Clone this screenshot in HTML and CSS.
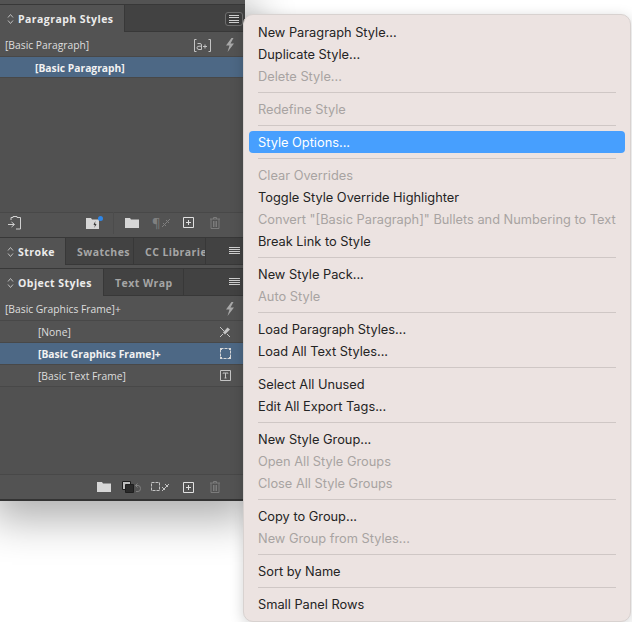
FILE: index.html
```html
<!DOCTYPE html>
<html lang="en">

<head>
    <meta charset="UTF-8">
    <meta name="viewport" content="width=device-width, initial-scale=1.0">
    <title>Paragraph Styles</title>
    <link rel="stylesheet" href="styles.css">
</head>

<body>
    <div class="panel">
        <div class="tabs">
            <div class="tab active tab-para"><span class="updown"><svg width="7" height="12" viewBox="0 0 7 12"><path d="M1 4.500 3.500 1.500 6 4.500M1 7.500 3.500 10.500 6 7.500"/></svg></span>Paragraph Styles</div>
            <div class="tab-fill"></div>
            <div class="menu-btn boxed"><i></i><i></i><i></i><i></i></div>
        </div>
        <div class="row row-head">
            <span class="row-text">[Basic Paragraph]</span>
            <svg class="icon-aplus" width="17" height="13" viewBox="0 0 17 13"><path d="M2.500.5H.5V12.500H2.500M14.500.5H16.500V12.500H14.500M3.500 4.500H6Q7.500 4.500 7.500 6V10.500H5Q3 10.500 3 8.800 3 7.200 5 7.200H7.500M9 7.500H13M11 5.500V9.500"/></svg>
            <svg class="icon-bolt" width="10" height="14" viewBox="0 0 10 14"><path d="M6.500 0 1 7.500H4.500L2.500 14 9 5.500H5.500L8.500 0Z"/></svg>
        </div>
        <div class="row selected row-para"><span class="indent-para">[Basic Paragraph]</span></div>
        <div class="list list-para"></div>
        <div class="footer footer-para">
            <svg class="ic-load" width="14" height="14" viewBox="0 0 14 14"><path d="M3 4V1.500H5V.5H9V1.500H12.500V13H8M0 8.500H6M3.500 6 6.500 8.500 3.500 11"/></svg>
            <span class="foot-gap-a"></span>
            <svg class="ic-folder-dot" width="17" height="13" viewBox="0 0 17 13"><path class="fill" d="M0 2H5L6 3.500H13V13H0Z"/><path class="notch" d="M9.500 5 7.500 8.500 9 9.500 8 12 10.500 8.500 9 7.500Z"/><circle class="dot" cx="14.500" cy="2.500" r="2.500"/></svg>
            <span class="foot-rule"></span>
            <svg class="ic-folder" width="14" height="10" viewBox="0 0 14 10"><path class="fill" d="M0 0H5L6 1.500H14V10H0Z"/></svg>
            <span class="para-mark">¶</span>
            <svg class="ic-star" width="8" height="8" viewBox="0 0 8 8"><path d="M0 8 8 0M4 1 7 4M1 4 4 7"/></svg>
            <svg class="ic-new" width="11" height="11" viewBox="0 0 11 11"><path d="M.5.5H10.500V10.500H.5ZM5.500 3V8M3 5.500H8"/></svg>
            <svg class="ic-trash" width="10" height="12" viewBox="0 0 10 12"><path d="M0 2H10M3.500 2V.5H6.500V2M1 2V11.500H9V2M3.500 4V10M5 4V10M6.500 4V10"/></svg>
        </div>
        <div class="panel-rule"></div>
        <div class="tabs">
            <div class="tab active tab-stroke"><span class="updown"><svg width="7" height="12" viewBox="0 0 7 12"><path d="M1 4.500 3.500 1.500 6 4.500M1 7.500 3.500 10.500 6 7.500"/></svg></span>Stroke</div>
            <div class="tab tab-swatches">Swatches</div>
            <div class="tab tab-cc"><span class="tab-clip">CC Libraries</span></div>
            <div class="tab-fill"></div>
            <div class="menu-btn"><i></i><i></i><i></i><i></i></div>
        </div>
        <div class="panel-rule rule-tall"></div>
        <div class="tabs">
            <div class="tab active tab-object"><span class="updown"><svg width="7" height="12" viewBox="0 0 7 12"><path d="M1 4.500 3.500 1.500 6 4.500M1 7.500 3.500 10.500 6 7.500"/></svg></span>Object Styles</div>
            <div class="tab tab-wrap">Text Wrap</div>
            <div class="tab-fill"></div>
            <div class="menu-btn"><i></i><i></i><i></i><i></i></div>
        </div>
        <div class="row row-head">
            <span class="row-text">[Basic Graphics Frame]+</span>
            <svg class="icon-bolt" width="10" height="14" viewBox="0 0 10 14"><path d="M6.500 0 1 7.500H4.500L2.500 14 9 5.500H5.500L8.500 0Z"/></svg>
        </div>
        <div class="row row-obj">
            <span class="indent-obj">[None]</span>
            <svg class="ic-none" width="12" height="12" viewBox="0 0 12 12"><path d="M1 1 5 5M8 8 11 11M1 11 4 8"/><path class="nib" d="M4 6.500 8.500 1.500 11 3.500 6 8.500Z"/></svg>
        </div>
        <div class="row row-obj selected">
            <span class="indent-obj">[Basic Graphics Frame]+</span>
            <svg class="ic-frame" width="11" height="11" viewBox="0 0 11 11"><path d="M.5.5H10.500V10.500H.5Z"/><path class="corners" d="M0 0H2V2H0ZM9 0H11V2H9ZM0 9H2V11H0ZM9 9H11V11H9Z"/></svg>
        </div>
        <div class="row row-obj">
            <span class="indent-obj">[Basic Text Frame]</span>
            <svg class="ic-text" width="11" height="11" viewBox="0 0 11 11"><path d="M.5.5H10.500V10.500H.5ZM3 3.500V3H8V3.500M5.500 3V8M4.500 8H6.500"/></svg>
        </div>
        <div class="list list-obj"></div>
        <div class="footer footer-obj">
            <span class="foot-gap-b"></span>
            <svg class="ic-folder" width="14" height="10" viewBox="0 0 14 10"><path class="fill" d="M0 0H5L6 1.500H14V10H0Z"/></svg>
            <svg class="ic-clear" width="19" height="13" viewBox="0 0 19 13"><path class="back" d="M.5.5H8.500V8.500H.5Z"/><path class="front" d="M3.500 3.500H11.500V11.500H3.500Z"/><path class="arrow" d="M13.500 4.500H16Q18.500 4.500 18.500 7.500T16 10.500H14M13.500 4.500 15.500 2.500M13.500 4.500 15.500 6.500"/></svg>
            <svg class="ic-frame-star" width="18" height="10" viewBox="0 0 18 10"><path class="dash" d="M.5.5H8.500V8.500H.5Z"/><path d="M11 9 18 2M14 2 17 5M11 5 14 8"/></svg>
            <svg class="ic-new" width="11" height="11" viewBox="0 0 11 11"><path d="M.5.5H10.500V10.500H.5ZM5.500 3V8M3 5.500H8"/></svg>
            <svg class="ic-trash" width="10" height="12" viewBox="0 0 10 12"><path d="M0 2H10M3.500 2V.5H6.500V2M1 2V11.500H9V2M3.500 4V10M5 4V10M6.500 4V10"/></svg>
        </div>
        <div class="panel-bottom"></div>
    </div>

    <div class="menu">
        <div class="item">New Paragraph Style...</div>
        <div class="item">Duplicate Style...</div>
        <div class="item off">Delete Style...</div>
        <div class="sep"></div>
        <div class="item off">Redefine Style</div>
        <div class="sep"></div>
        <div class="item hover">Style Options...</div>
        <div class="sep"></div>
        <div class="item off">Clear Overrides</div>
        <div class="item">Toggle Style Override Highlighter</div>
        <div class="item off">Convert "[Basic Paragraph]" Bullets and Numbering to Text</div>
        <div class="item">Break Link to Style</div>
        <div class="sep"></div>
        <div class="item">New Style Pack...</div>
        <div class="item off">Auto Style</div>
        <div class="sep"></div>
        <div class="item">Load Paragraph Styles...</div>
        <div class="item">Load All Text Styles...</div>
        <div class="sep"></div>
        <div class="item">Select All Unused</div>
        <div class="item">Edit All Export Tags...</div>
        <div class="sep"></div>
        <div class="item">New Style Group...</div>
        <div class="item off">Open All Style Groups</div>
        <div class="item off">Close All Style Groups</div>
        <div class="sep"></div>
        <div class="item">Copy to Group...</div>
        <div class="item off">New Group from Styles...</div>
        <div class="sep"></div>
        <div class="item">Sort by Name</div>
        <div class="sep"></div>
        <div class="item">Small Panel Rows</div>
    </div>
</body>

</html>
```

FILE: styles.css
```css
html,
body {
  margin: 0;
  height: 622px;
  overflow: hidden;
  background: #fff;
}

body {
  position: relative;
  font-family: "Open Sans", sans-serif;
}

svg {
  display: block;
  flex: none;
  fill: none;
  stroke: #c4c4c4;
  stroke-width: 1;
}

/* panel */
.panel {
  width: 245px;
  height: 501px;
  box-sizing: border-box;
  padding-top: 4px;
  display: flex;
  flex-direction: column;
  background: #535353;
  box-shadow: 0 10px 40px 8px rgba(0, 0, 0, 0.32);
}

.tabs {
  display: flex;
  flex: none;
  height: 26px;
  background: #424242;
  border-top: 1px solid #383838;
  border-bottom: 1px solid #383838;
}

.tab {
  display: flex;
  align-items: center;
  flex: none;
  box-sizing: border-box;
  height: 27px;
  padding-left: 11px;
  font-size: 10.5px;
  font-weight: 700;
  letter-spacing: 0.45px;
  white-space: nowrap;
  color: #a6a6a6;
  border-right: 1px solid #383838;
}

.tab.active {
  background: #535353;
  color: #ececec;
  padding-left: 7px;
}

.tab-para {
  width: 125px;
}

.tab-stroke {
  width: 66px;
}

.tab-swatches {
  width: 68px;
}

.tab-cc {
  width: 72px;
}

.tab-clip {
  width: 60px;
  overflow: hidden;
}

.tab-object {
  width: 104px;
}

.tab-wrap {
  width: 80px;
}

.tab-fill {
  flex: 1;
}

.updown {
  width: 11px;
}

.updown svg {
  stroke: #bdbdbd;
}

.menu-btn {
  width: 11px;
  height: 7px;
  margin: 9px 5px 0 0;
  display: flex;
  flex-direction: column;
  justify-content: space-between;
}

.menu-btn i {
  display: block;
  height: 1px;
  background: #cfcfcf;
}

.menu-btn.boxed {
  width: 10px;
  height: 8px;
  margin: 7px 2px 0 0;
  padding: 2px 3px;
  border: 1px solid #6e6e6e;
  border-radius: 3px;
  background: #3c3c3c;
}

.row {
  display: flex;
  align-items: center;
  flex: none;
  box-sizing: border-box;
  font-size: 10.3px;
  color: #dedede;
  border-bottom: 1px solid #484848;
}

.row-head {
  height: 25px;
  padding: 2px 10px 0 5px;
}

.row-text {
  flex: 1;
}

.row.selected {
  background: #4d6885;
  color: #f2f2f2;
  font-weight: 700;
}

.row-para {
  height: 21px;
  padding-top: 1px;
}

.indent-para {
  padding-left: 35px;
}

.row-obj {
  height: 22px;
  padding-right: 14px;
}

.indent-obj {
  flex: 1;
  padding-left: 38px;
}

.icon-aplus {
  margin-right: 14px;
}

.icon-bolt {
  fill: #a8a8a8;
  stroke: none;
}

.ic-none .nib {
  fill: #c4c4c4;
  stroke: none;
}

.list {
  flex: none;
  background: #515151;
}

.list-para {
  height: 134px;
}

.list-obj {
  height: 87px;
}

.footer {
  display: flex;
  align-items: center;
  flex: none;
  height: 23px;
  border-top: 1px solid #484848;
  background: #535353;
  box-sizing: border-box;
}

.footer .fill {
  fill: #d6d6d6;
  stroke: none;
}

.footer-para {
  padding: 0 0 3px 8px;
}

.foot-gap-a {
  width: 64px;
}

.foot-rule {
  width: 1px;
  height: 22px;
  background: #4c4c4c;
  margin: 0 11px 0 10px;
}

.ic-folder-dot .notch {
  fill: #3a3a3a;
  stroke: none;
}

.ic-folder-dot .dot {
  fill: #2f86e6;
  stroke: none;
}

.para-mark {
  width: 8px;
  font-size: 13px;
  color: #808080;
  margin-left: 13px;
}

.ic-star {
  stroke: #808080;
  margin-left: 2px;
}

.ic-new {
  stroke: #e0e0e0;
  margin-left: 13px;
}

.ic-trash {
  stroke: #7c7c7c;
  margin-left: 16px;
}

.ic-load {
  stroke: #d0d0d0;
}

.foot-gap-b {
  width: 97px;
}

.footer-obj {
  height: 25px;
}

.ic-clear {
  margin-left: 11px;
}

.ic-clear .back {
  fill: #bdbdbd;
  stroke: #1e1e1e;
}

.ic-clear .front {
  fill: #2a2a2a;
  stroke: #1e1e1e;
}

.ic-clear .arrow {
  stroke: #808080;
}

.ic-frame-star {
  margin-left: 10px;
}

.ic-frame-star .dash,
.ic-frame {
  stroke-dasharray: 3 1;
}

.ic-frame {
  stroke: #d8d8d8;
}

.ic-frame .corners {
  fill: #d8d8d8;
  stroke: none;
}

.footer-obj .ic-new {
  margin-left: 14px;
}

.panel-rule {
  flex: none;
  height: 2px;
  background: #535353;
}

.rule-tall {
  height: 3px;
}

.panel-bottom {
  flex: none;
  height: 2px;
  background: #333;
}

/* menu */
.menu {
  position: absolute;
  left: 243px;
  top: 14px;
  width: 388px;
  box-sizing: border-box;
  padding: 6px 5px;
  background: #ece3e1;
  border: 1px solid #d8d2d0;
  border-radius: 10px;
  box-shadow: 0 3px 14px rgba(0, 0, 0, 0.18);
  font-family: Inter, sans-serif;
  font-size: 12.8px;
  color: #242424;
}

.item {
  height: 22px;
  line-height: 24px;
  padding-left: 9px;
  white-space: nowrap;
  border-radius: 4px;
}

.item.off {
  color: #a8a3a2;
}

.item.hover {
  background: #479ffe;
  color: #fff;
}

.sep {
  height: 1px;
  margin: 5px 9px;
  background: #cfc7c5;
}
```
